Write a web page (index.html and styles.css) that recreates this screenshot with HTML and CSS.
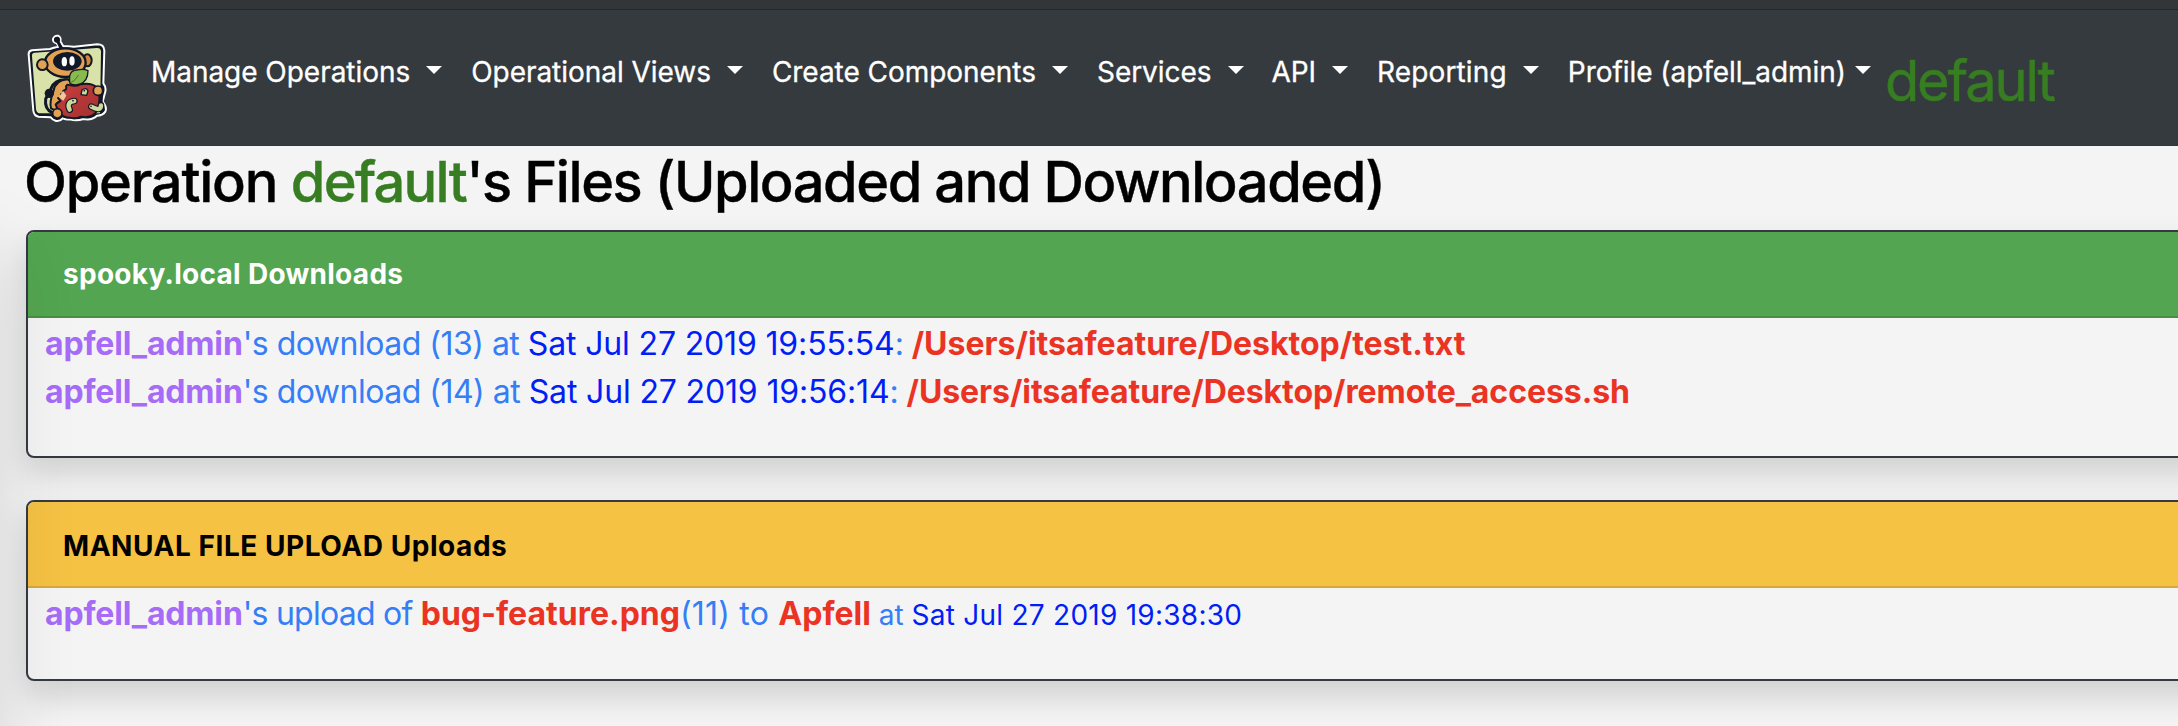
FILE: index.html
```html
<!DOCTYPE html>
<html lang="en">
<head>
<meta charset="utf-8">
<title>Operation Files</title>
<link rel="stylesheet" href="styles.css">
</head>
<body>
<div class="topstrip"></div>
<nav class="navbar">
  <svg class="logo" viewBox="78 102 246 276" width="82" height="92">
    <defs>
      <linearGradient id="apple" x1="0" y1="0" x2="1" y2="1"><stop offset="0" stop-color="#c8403c"/><stop offset="1" stop-color="#a32f31"/></linearGradient>
    </defs>
    <g stroke-linejoin="round" stroke-linecap="round">
      <path d="M86 164Q85 153 96 151L150 147Q160 143 176 140L170 130Q158 127 159 117Q163 106 174 107Q184 112 181 124L190 139Q208 138 222 140L292 133Q312 133 313 152L310 250Q321 264 314 282L308 305Q322 322 316 335Q308 347 291 347Q275 362 250 357Q230 364 210 358Q200 360 188 355Q180 365 168 363Q157 360 152 352L116 350Q102 348 100 332Z" fill="#111827" stroke="#fff" stroke-width="6"/>
      <path d="M96 168Q95 159 104 158L290 144Q302 143 303 154L300 340L118 340Q110 339 108 328Z" fill="#d9e3a9"/>
      <circle cx="171" cy="119" r="9" fill="#111827"/>
      <path d="M173 124L182 142" stroke="#111827" stroke-width="9" fill="none"/>
      <path d="M205 240Q165 236 153 266L137 297Q133 328 157 338" stroke="#111827" stroke-width="9" fill="none"/>
      <path d="M203 238Q165 240 160 275Q148 305 153 325L180 338L225 290L212 245Z" fill="#e3a253" stroke="#111827" stroke-width="6"/>
      <circle cx="148" cy="280" r="14" fill="#111827"/>
      <path d="M303 282V315" stroke="#111827" stroke-width="10"/>
      <ellipse cx="262" cy="181" rx="13" ry="18" fill="#d48a3c" stroke="#111827" stroke-width="6"/>
      <ellipse cx="196" cy="188" rx="61" ry="43" fill="#e3a253" stroke="#111827" stroke-width="7"/>
      <circle cx="127" cy="194" r="16" fill="#e3a253" stroke="#111827" stroke-width="6"/>
      <ellipse cx="202" cy="184" rx="43" ry="28" fill="#111827"/>
      <ellipse cx="193" cy="185" rx="8" ry="14" fill="#fff"/>
      <ellipse cx="216" cy="183" rx="8" ry="14" fill="#fff"/>
      <path d="M202 254Q225 261 241 253Q273 247 291 262Q302 281 297 312Q294 338 275 348Q257 354 243 350Q225 358 211 353Q188 354 175 335L167 313Q173 307 181 303L174 294Q185 294 183 283Q193 282 190 272Q202 269 198 259Z" fill="url(#apple)" stroke="#111827" stroke-width="6"/>
      <path d="M176 292L190 302L199 287L190 273Z" fill="#f0c89a"/>
      <path d="M210 251Q203 212 229 210Q251 205 264 212Q264 243 240 252Q222 258 210 251Z" fill="#88ba4e" stroke="#111827" stroke-width="4"/>
      <path d="M213 248Q226 242 235 226" stroke="#4b772b" stroke-width="3" fill="none"/>
      <path d="M243 284L246 270Q258 260 264 273L260 286Z" fill="#cfd99b" stroke="#111827" stroke-width="4"/>
      <path d="M223 303Q198 306 209 329" stroke="#111827" stroke-width="20" fill="none"/>
      <path d="M223 303Q198 306 209 329" stroke="#cfd99b" stroke-width="13" fill="none"/>
      <path d="M274 320Q303 336 303 316" stroke="#111827" stroke-width="20" fill="none"/>
      <path d="M274 320Q303 336 303 316" stroke="#cfd99b" stroke-width="13" fill="none"/>
      <circle cx="219" cy="302" r="2.500" fill="#111827"/><circle cx="273" cy="319" r="2.500" fill="#111827"/><circle cx="253" cy="272" r="2.500" fill="#111827"/>
      <circle cx="294" cy="272" r="14" fill="#e3a253" stroke="#111827" stroke-width="5"/>
      <circle cx="172" cy="340" r="14" fill="#e3a253" stroke="#111827" stroke-width="5"/>
    </g>
  </svg>
  <div class="links">
    <a class="link l1"><span>Manage Operations</span></a>
    <a class="link l2"><span>Operational Views</span></a>
    <a class="link l3"><span>Create Components</span></a>
    <a class="link l4"><span>Services</span></a>
    <a class="link l5"><span>API</span></a>
    <a class="link l6"><span>Reporting</span></a>
    <a class="link l7"><span>Profile (apfell_admin)</span></a>
  </div>
  <span class="current">default</span>
</nav>
<main class="content">
  <h1 class="title"><span class="lead">Operation </span><span class="op">default</span>'s Files (Uploaded and Downloaded)</h1>
  <section class="card downloads">
    <header class="card-head green">spooky.local Downloads</header>
    <div class="row"><b class="user">apfell_admin</b><span class="act">'s download (13) at </span><span class="date">Sat Jul 27 2019 19:55:54</span><span class="sep">: </span><b class="path">/Users/itsafeature/Desktop/test.txt</b></div>
    <div class="row"><b class="user">apfell_admin</b><span class="act">'s download (14) at </span><span class="date">Sat Jul 27 2019 19:56:14</span><span class="sep">: </span><b class="path long">/Users/itsafeature/Desktop/remote_access.sh</b></div>
  </section>
  <section class="card uploads">
    <header class="card-head amber">MANUAL FILE UPLOAD Uploads</header>
    <div class="row"><b class="user">apfell_admin</b><span class="act up">'s upload of </span><b class="path">bug-feature.png</b><span class="target">(11) to </span><b class="path">Apfell</b><span class="when"> at <span class="date">Sat Jul 27 2019 19:38:30</span></span></div>
  </section>
</main>
<div class="edge-shade"></div>
</body>
</html>
```
FILE: styles.css
```css
* { box-sizing: border-box; }
html, body { margin: 0; height: 726px; overflow: hidden; }
body { background: #f4f4f4; font-family: Inter, "Liberation Sans", sans-serif; }
.topstrip { height: 10px; background: #323639; border-bottom: 1px solid #25282a; }
.navbar { height: 136px; background: #353a3e; border-bottom: 1px solid #30343f; display: flex; align-items: flex-start; padding: 24px 0 0 26px; }
.logo { flex: none; }
.links { display: flex; margin: 17px 0 0 43px; }
.link { color: #fff; font-size: 28px; line-height: 42px; display: flex; white-space: nowrap; letter-spacing: -0.04px; margin-right: 29px; -webkit-text-stroke: 0.3px #fff; }
.link::after { content: ""; border: 8px solid transparent; border-top-color: #fff; border-bottom: 0; margin: 15px 0 0 16px; height: 8px; }
.l4 { margin-right: 28px; }
.l5 { letter-spacing: -0.1px; }
.l6 { letter-spacing: 0.15px; }
.l7 { margin-right: 0; }
.l7::after { margin-left: 9px; }
.current { font-size: 56px; line-height: 84px; color: #377d22; margin: 5px 0 0 14px; letter-spacing: -2.2px; -webkit-text-stroke: 0.5px #377d22; }
.content { padding: 0 26px; }
.title { margin: 0 0 0 -2px; height: 84px; padding-top: 3px; font-size: 56px; line-height: 67px; font-weight: 500; color: #000; white-space: nowrap; letter-spacing: -1.45px; -webkit-text-stroke: 0.4px; }
.lead { letter-spacing: -1.25px; }
.op { color: #377d22; letter-spacing: -1.7px; }
.card { width: 2200px; border: 2px solid #343a40; border-radius: 8px; background: #f4f4f4; box-shadow: 0 16px 32px rgba(0,0,0,.15); }
.downloads { height: 228px; margin-bottom: 42px; }
.uploads { height: 181px; }
.card-head { height: 86px; padding-left: 35px; font-size: 28px; line-height: 84px; font-weight: 700; border-radius: 6px 6px 0 0; border-bottom: 2px solid rgba(0,0,0,.125); }
.green { background: #53a551; color: #fff; letter-spacing: 0.28px; }
.amber { background: #f5c244; color: #000; letter-spacing: 0.55px; padding-top: 2px; }
.row { position: relative; top: 2px; height: 48px; line-height: 48px; padding-left: 17px; font-size: 32px; color: #357ef6; white-space: nowrap; }
.user { color: #a66cf7; letter-spacing: -0.16px; }
.act { letter-spacing: -0.5px; }
.act.up { letter-spacing: -0.75px; }
.sep { letter-spacing: -0.6px; }
.target { letter-spacing: 0.2px; }
.date { color: #001ef5; letter-spacing: -0.15px; }
.path { color: #eb3324; }
.path.long { letter-spacing: -0.06px; }
.when { font-size: 28px; }
.when .date { letter-spacing: 0.26px; }
/* soft shade along the left side of the content area */
.edge-shade { position: fixed; left: -100px; top: 250px; width: 100px; height: 600px; box-shadow: 0 0 80px rgba(0,0,0,.13); pointer-events: none; }
```
